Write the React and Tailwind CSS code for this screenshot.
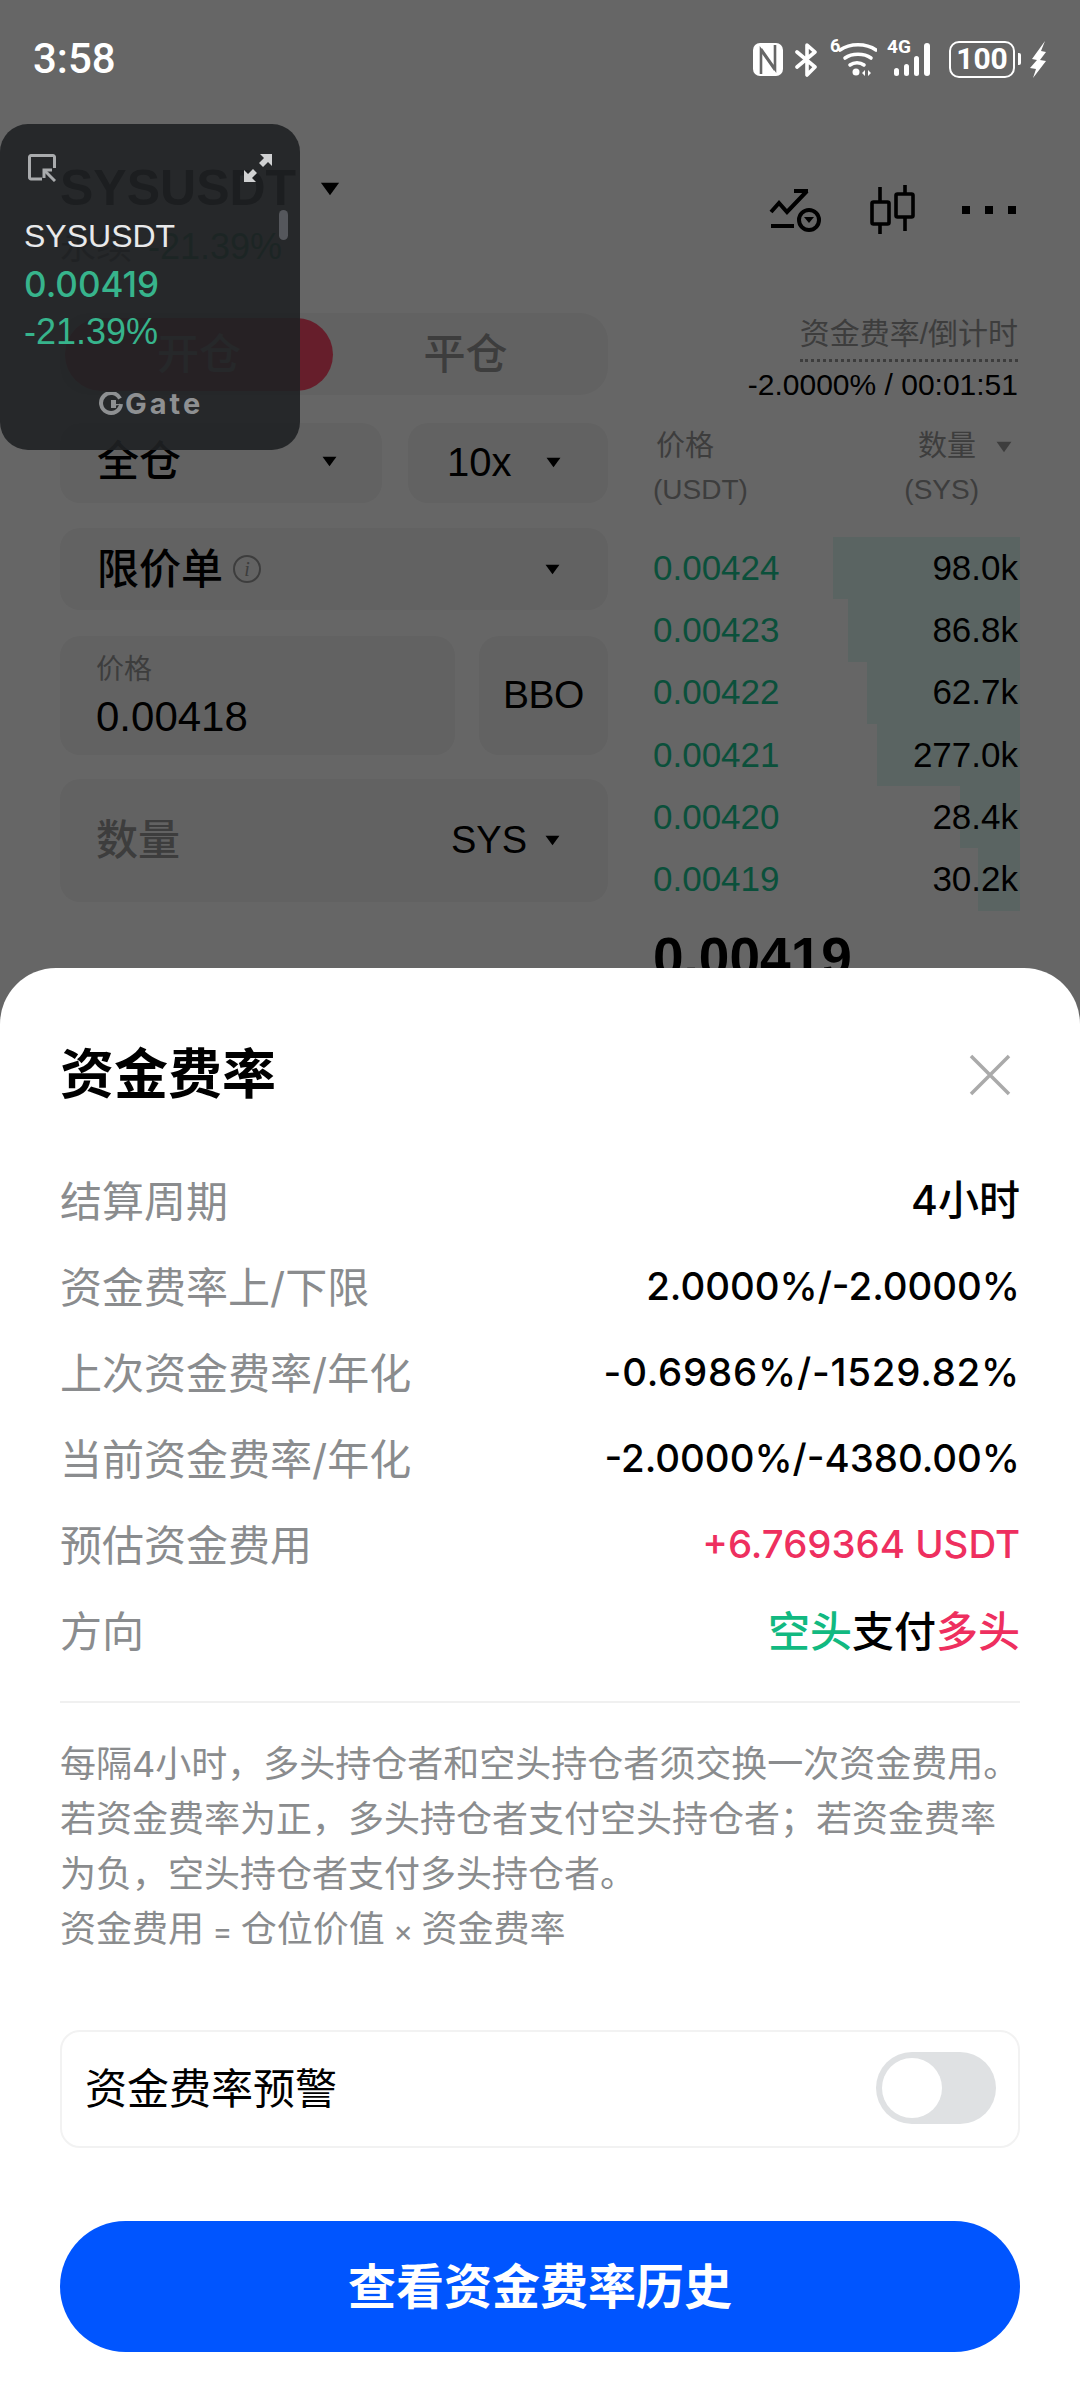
import React from "react";

const book = [
  { price: "0.00424", size: "98.0k", depth: 187 },
  { price: "0.00423", size: "86.8k", depth: 172 },
  { price: "0.00422", size: "62.7k", depth: 153 },
  { price: "0.00421", size: "277.0k", depth: 143 },
  { price: "0.00420", size: "28.4k", depth: 60 },
  { price: "0.00419", size: "30.2k", depth: 42 },
];

const fundingRows = [
  { label: "资金费率上/下限", value: "2.0000%/-2.0000%", tone: "text-black" },
  { label: "上次资金费率/年化", value: "-0.6986%/-1529.82%", tone: "tracking-[0.8px] text-black" },
  { label: "当前资金费率/年化", value: "-2.0000%/-4380.00%", tone: "text-black" },
  { label: "预估资金费用", value: "+6.769364 USDT", tone: "text-[#ee2f5f]" },
];

function Caret({ className }) {
  return (
    <svg className={className} viewBox="0 0 14 10" fill="currentColor">
      <path d="M0.5 0.5h13L7 9.5z" />
    </svg>
  );
}

function StatusBar() {
  return (
    <div className="absolute left-0 top-0 flex h-[118px] w-full items-center justify-between pl-[33px] pr-[34px] text-white">
      <span className="font-['Roboto',sans-serif] text-[42px] font-medium leading-none">3:58</span>
      <div className="flex items-center">
        {/* nfc */}
        <svg width="30" height="33" viewBox="0 0 30 33">
          <rect width="30" height="33" rx="7" fill="#fff" />
          <path d="M8 31V7l14 20M22 2v24L8 6" fill="none" stroke="#666" strokeWidth="2.6" />
        </svg>
        {/* bluetooth */}
        <svg className="ml-[12px]" width="23" height="35" viewBox="0 0 23 35" fill="none" stroke="#fff" strokeWidth="3.6" strokeLinecap="round" strokeLinejoin="round">
          <path d="M2 10l18 15-8 8V3l8 7L2 25" />
        </svg>
        {/* wifi */}
        <div className="relative ml-[12px] h-[36px] w-[47px]">
          <span className="absolute left-0 top-[-5px] font-['Roboto',sans-serif] text-[18px] font-bold leading-[20px]">6</span>
          <svg className="absolute left-[7px] top-0" width="40" height="36" viewBox="0 0 40 36" fill="none" stroke="#fff" strokeWidth="3.6" strokeLinecap="round">
            <path d="M3 9c10-7 26-7 36 0" />
            <path d="M8 17c7-5 19-5 26 0" />
            <path d="M13 24c4-3 10-3 14 0" />
            <circle cx="19" cy="31" r="3.5" fill="#fff" stroke="none" />
            <path d="M28 29l-3 3 3 3zM31 29l3 3-3 3z" fill="#fff" stroke="none" />
          </svg>
        </div>
        {/* cellular */}
        <div className="relative ml-[10px] h-[36px] w-[50px]">
          <span className="absolute left-0 top-[-4px] font-['Roboto',sans-serif] text-[19px] font-bold leading-[20px]">4G</span>
          <svg className="absolute left-0 top-0" width="50" height="36" viewBox="0 0 50 36" fill="#fff">
            <rect x="7" y="27" width="5" height="8" rx="2.5" />
            <rect x="17" y="23" width="5" height="12" rx="2.5" />
            <rect x="27" y="15" width="5" height="20" rx="2.5" />
            <rect x="37" y="2" width="6" height="33" rx="3" />
          </svg>
        </div>
        {/* battery */}
        <div className="ml-[12px] flex h-[37px] w-[66px] items-center justify-center rounded-[10px] border-[2.5px] border-white">
          <span className="font-['Roboto',sans-serif] text-[30px] font-bold leading-none">100</span>
        </div>
        <div className="ml-[3px] h-[12px] w-[3px] rounded-r-[2px] bg-white" />
        <svg className="ml-[9px]" width="16" height="37" viewBox="0 0 16 37" fill="#fff">
          <path d="M15 0L2 18l5 1-7 8 6 1-3 9 13-17-6-1 6-8-5-1z" />
        </svg>
      </div>
    </div>
  );
}

function FloatingTicker() {
  return (
    <div className="absolute left-0 top-[124px] flex h-[326px] w-[300px] flex-col rounded-[28px] bg-[#1f2123]/90 pl-[24px] pt-[30px] font-['Liberation_Sans',sans-serif]">
      <div className="flex w-[248px] items-start justify-between pl-[4px]">
        <svg width="28" height="28" viewBox="0 0 28 28" fill="none" stroke="#a9abad" strokeWidth="3">
          <path d="M14 25H3a1.5 1.5 0 0 1-1.5-1.5V3A1.5 1.5 0 0 1 3 1.5h22A1.5 1.5 0 0 1 26.5 3v11" />
          <path d="M27 27L17 17" />
          <path d="M16 24v-8h8" />
        </svg>
        <svg width="28" height="28" viewBox="0 0 28 28" fill="#d0d1d2">
          <path d="M16 0h12v12l-4-4-5 5-4-4 5-5z" />
          <path d="M12 28H0V16l4 4 5-5 4 4-5 5z" />
        </svg>
      </div>
      <div className="relative mt-[31px] text-[32px] leading-[46px] text-[#e8e9ea]">
        SYSUSDT
        <div className="absolute right-[12px] top-[-3px] h-[30px] w-[9px] rounded-full bg-[#55575c]" />
      </div>
      <div className="mt-[1px] font-['Inter',sans-serif] text-[35px] font-medium leading-[48px] text-[#37b48c]">0.00419</div>
      <div className="text-[36px] leading-[47px] text-[#37b48c]">-21.39%</div>
      <div className="mt-[34px] flex items-center pl-[75px] text-[#8e9092]">
        <svg width="24" height="24" viewBox="0 0 24 24" fill="none">
          <path d="M21 6.5A10 10 0 1 0 22 12" stroke="currentColor" strokeWidth="4" />
          <path d="M12 12h10v0a10 10 0 0 1-10 0z" fill="currentColor" />
          <rect x="12" y="8" width="5" height="8" fill="currentColor" />
        </svg>
        <span className="ml-[2px] font-['Inter',sans-serif] text-[29px] font-bold leading-none tracking-[3px]">Gate</span>
      </div>
    </div>
  );
}

function TradePage() {
  return (
    <div className="font-['Liberation_Sans','Noto_Sans_CJK_SC',sans-serif] text-black">
      {/* header */}
      <div className="flex h-[272px] items-start justify-between pl-[60px] pr-[64px] pt-[158px]">
        <div>
          <div className="flex items-center">
            <span className="text-[50px] font-bold leading-[60px]">SYSUSDT</span>
            <Caret className="ml-[24px] mt-[2px] h-[14px] w-[20px] text-black" />
          </div>
          <div className="flex h-[40px] items-center gap-[16px] pt-[18px] text-[36px] text-[#10b37c]">
            <span className="text-[#777]">永续</span>
            <span>-21.39%</span>
          </div>
        </div>
        <div className="mt-[26px] flex items-center">
          <svg width="52" height="44" viewBox="0 0 52 44" fill="none" stroke="#000" strokeWidth="4">
            <path d="M2 24l8-9 8 9L38 3" />
            <path d="M25 3h14" />
            <path d="M2 38h23" />
            <circle cx="40" cy="32" r="10" />
            <path d="M35 29h10l-5 6z" fill="#000" stroke="none" />
          </svg>
          <svg className="ml-[49px]" width="46" height="52" viewBox="0 0 46 52" fill="none" stroke="#000" strokeWidth="3.6">
            <path d="M10 3v47M35 1v46" />
            <rect x="2" y="18" width="17" height="22" rx="1.5" fill="#fff" />
            <rect x="26" y="10" width="17" height="23" rx="1.5" fill="#fff" />
          </svg>
          <div className="ml-[46px] flex gap-[15px]">
            <div className="h-[8px] w-[8px] bg-black" />
            <div className="h-[8px] w-[8px] bg-black" />
            <div className="h-[8px] w-[8px] bg-black" />
          </div>
        </div>
      </div>

      <div className="mt-[41px] flex pl-[60px] pr-[60px]">
        {/* order form */}
        <div className="flex w-[548px] flex-col">
          <div className="flex h-[82px] items-center rounded-[28px] bg-[#f5f5f5] pl-[5px] pr-[10px] text-[42px] font-medium">
            <div className="flex h-[73px] w-[268px] items-center justify-center rounded-full bg-[#ff4d6b] text-white">开仓</div>
            <div className="flex flex-1 items-center justify-center text-[#999]">平仓</div>
          </div>
          <div className="mt-[28px] flex h-[80px] gap-[26px] text-[40px]">
            <div className="flex w-[322px] items-center justify-between rounded-[20px] bg-[#f5f5f5] pb-[3px] pl-[37px] pr-[45px] text-[42px] font-medium">
              全仓
              <Caret className="h-[11px] w-[15px]" />
            </div>
            <div className="flex flex-1 items-center justify-between rounded-[20px] bg-[#f5f5f5] pb-[2px] pl-[39px] pr-[47px]">
              10x
              <Caret className="h-[11px] w-[15px]" />
            </div>
          </div>
          <div className="mt-[25px] flex h-[82px] items-center rounded-[20px] bg-[#f5f5f5] pl-[37px] pr-[48px] text-[42px] font-medium">
            限价单
            <div className="ml-[10px] flex h-[28px] w-[28px] items-center justify-center rounded-full border-[2px] border-[#999] font-['Liberation_Serif',serif] text-[20px] font-normal italic leading-none text-[#999]">i</div>
            <Caret className="ml-auto h-[11px] w-[15px]" />
          </div>
          <div className="mt-[26px] flex h-[119px] gap-[24px]">
            <div className="flex w-[395px] flex-col rounded-[20px] bg-[#f5f5f5] pl-[36px] pt-[16px]">
              <span className="text-[28px] leading-[36px] text-[#999]">价格</span>
              <span className="mt-[4px] text-[42px] leading-[50px]">0.00418</span>
            </div>
            <div className="flex flex-1 items-center justify-center rounded-[20px] bg-[#f5f5f5] text-[39px] tracking-[-0.5px]">BBO</div>
          </div>
          <div className="mt-[24px] flex h-[123px] items-center rounded-[20px] bg-[#f5f5f5] pl-[36px] pr-[48px]">
            <span className="text-[42px] font-medium text-[#999]">数量</span>
            <span className="ml-auto text-[38px]">SYS</span>
            <Caret className="ml-[18px] h-[11px] w-[15px]" />
          </div>
        </div>

        {/* order book */}
        <div className="ml-[45px] flex w-[367px] flex-col">
          <div className="flex flex-col items-end pr-[2px]">
            <span className="border-b-[3px] border-dotted border-[#999] pb-[5px] text-[30px] leading-[41px] text-[#999]">资金费率/倒计时</span>
            <span className="mt-[5px] text-[30px] leading-[36px]">-2.0000% / 00:01:51</span>
          </div>
          <div className="mt-[22px] flex justify-between pl-[3px] pr-[8px] text-[29px] leading-[43px] text-[#999]">
            <span>价格</span>
            <span className="flex items-center">
              数量
              <Caret className="ml-[20px] h-[12px] w-[16px] text-[#999]" />
            </span>
          </div>
          <div className="flex justify-between pr-[41px] text-[28px] leading-[44px] text-[#999]">
            <span>(USDT)</span>
            <span>(SYS)</span>
          </div>
          <div className="mt-[25px] flex flex-col">
            {book.map((row) => (
              <div key={row.price} className="relative flex h-[62.3px] items-center justify-between pr-[2px] text-[35px]">
                <div className="absolute bottom-0 right-0 top-0 bg-[#e2fbf4]" style={{ width: row.depth }} />
                <span className="relative text-[#1cc893]">{row.price}</span>
                <span className="relative">{row.size}</span>
              </div>
            ))}
          </div>
          <div className="mt-[16px] text-[55px] font-bold leading-[60px]">0.00419</div>
        </div>
      </div>
    </div>
  );
}

function FundingSheet() {
  return (
    <div className="absolute bottom-0 left-0 h-[1432px] w-full rounded-t-[56px] bg-white px-[60px] pt-[77px] font-['Inter','Noto_Sans_CJK_SC',sans-serif]">
      <div className="flex h-[60px] items-center justify-between">
        <h2 className="text-[54px] font-bold leading-[60px] text-black">资金费率</h2>
        <svg className="mr-[9px]" width="42" height="42" viewBox="0 0 42 42" fill="none" stroke="#aaa" strokeWidth="3.5">
          <path d="M2 2l38 38M40 2L2 40" />
        </svg>
      </div>

      <div className="mt-[53px] flex flex-col">
        <div className="flex h-[86px] items-center justify-between text-[42px]">
          <span className="text-[#8a8c8e]">结算周期</span>
          <span className="text-[41px] font-medium text-black">4小时</span>
        </div>
        {fundingRows.map((row) => (
          <div key={row.label} className="flex h-[86px] items-center justify-between text-[42px]">
            <span className="text-[#8a8c8e]">{row.label}</span>
            <span className={`text-[38.4px] font-medium ${row.tone}`}>{row.value}</span>
          </div>
        ))}
        <div className="flex h-[86px] items-center justify-between text-[42px]">
          <span className="text-[#8a8c8e]">方向</span>
          <span className="font-medium">
            <span className="text-[#12b981]">空头</span>
            <span className="text-black">支付</span>
            <span className="text-[#ee2f5f]">多头</span>
          </span>
        </div>
      </div>

      <div className="mt-[27px] h-[2px] bg-[#f0f0f0]" />

      <p className="mt-[34px] text-[36px] leading-[55px] text-[#8a8c8e]">
        每隔4小时，多头持仓者和空头持仓者须交换一次资金费用。
        <br />
        若资金费率为正，多头持仓者支付空头持仓者；若资金费率为负，空头持仓者支付多头持仓者。
        <br />
        资金费用<span className="text-[30px] leading-none"> = </span>仓位价值<span className="text-[30px] leading-none"> × </span>资金费率
      </p>

      <div className="mt-[73px] flex h-[118px] items-center justify-between rounded-[20px] border-[2px] border-[#f2f2f2] pb-[2px] pl-[23px] pr-[22px]">
        <span className="text-[42px] text-black">资金费率预警</span>
        <div className="h-[72px] w-[120px] rounded-full bg-[#dfe1e3] p-[6px]">
          <div className="h-[60px] w-[60px] rounded-full bg-white" />
        </div>
      </div>

      <button className="mt-[73px] flex h-[131px] w-full items-center justify-center rounded-full bg-[#0055ff] text-[48px] font-bold text-white">
        查看资金费率历史
      </button>
    </div>
  );
}

export default function App() {
  return (
    <div className="relative h-[2400px] w-[1080px] overflow-hidden bg-white">
      <TradePage />
      {/* dim layer behind the sheet */}
      <div className="absolute inset-0 bg-black/60" />
      <StatusBar />
      <FloatingTicker />
      <FundingSheet />
    </div>
  );
}
